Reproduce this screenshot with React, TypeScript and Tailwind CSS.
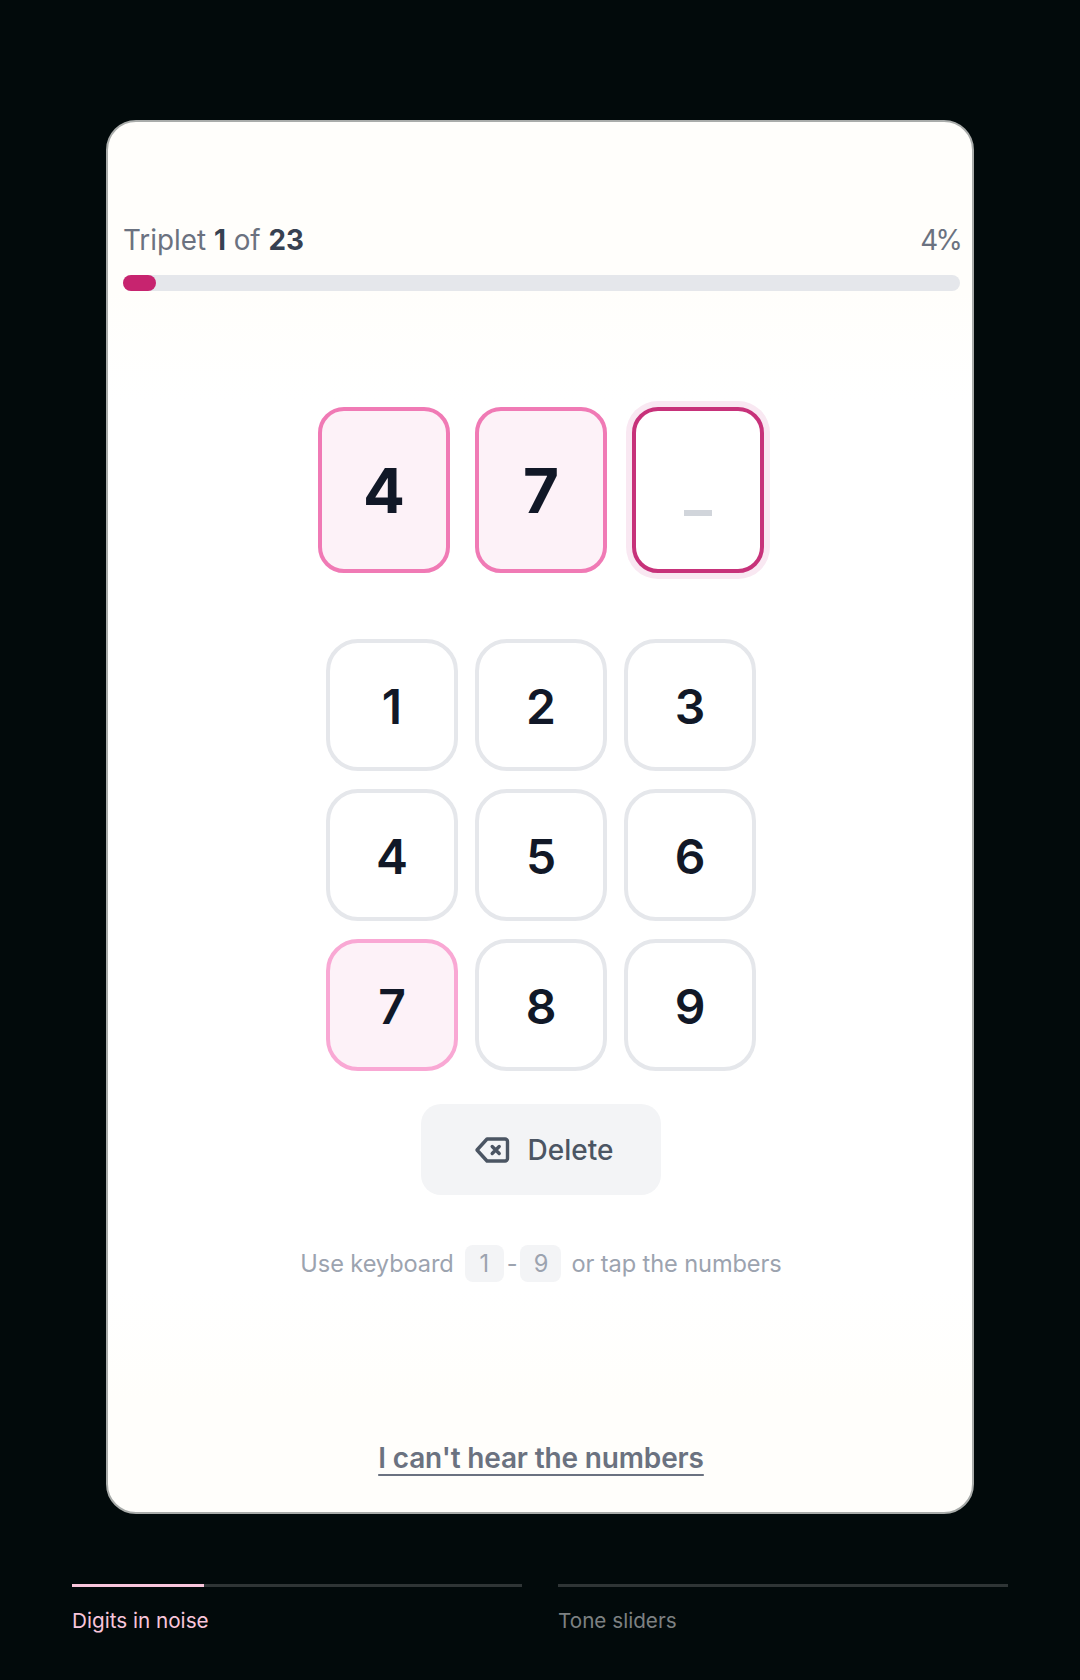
const font = "font-['Inter','Liberation_Sans',sans-serif]"

function Digit({ value }: { value: string }) {
  return (
    <div className="w-[132px] h-[166px] rounded-[26px] border-4 border-[#f07ab5] bg-[#fdf2f8] flex items-center justify-center text-[62px] font-bold text-[#111827]">
      {value}
    </div>
  )
}

function Key({ value, active }: { value: string; active?: boolean }) {
  return (
    <button
      className={
        active
          ? 'w-[132px] h-[132px] pt-[3px] rounded-[32px] border-4 border-[#f9a8d4] bg-[#fdf2f8] text-[48px] font-semibold text-[#111827]'
          : 'w-[132px] h-[132px] pt-[3px] rounded-[32px] border-4 border-[#e5e7eb] bg-white text-[48px] font-semibold text-[#111827]'
      }
    >
      {value}
    </button>
  )
}

export default function App() {
  return (
    <div className={`${font} w-[1080px] h-[1680px] bg-[#020a0b] flex flex-col items-center pt-[120px]`}>
      <div className="w-[868px] h-[1394px] rounded-[30px] border-2 border-[#a9acaa] bg-[#fffefb] flex flex-col items-center">
        <div className="w-full pl-[15px] pr-[12px] pt-[103px]">
          <div className="flex justify-between items-center h-[32px] text-[27.8px] text-[#6b7280]">
            <span>
              Triplet <b className="font-bold text-[#374151]">1</b> of <b className="font-bold text-[#374151]">23</b>
            </span>
            <span className="tracking-[-0.1em]">4%</span>
          </div>
          <div className="mt-[18px] h-4 w-full rounded-full bg-[#e5e7eb]">
            <div className="h-4 w-[33px] rounded-full bg-[#c7246f]" />
          </div>
        </div>

        <div className="w-full flex-1 flex flex-col items-center pl-[2px] bg-[linear-gradient(to_bottom,#fffefb,#ffffff_10%,#ffffff_90%,#fffefb)]">
          <div className="flex gap-[25px] mt-[116px]">
            <Digit value="4" />
            <Digit value="7" />
            <div className="w-[132px] h-[166px] rounded-[26px] border-4 border-[#c7327a] bg-white shadow-[0_0_0_6px_#f9e8f2] flex items-center justify-center">
              <div className="w-[28px] h-[6px] bg-[#d1d5db] mt-[46px]" />
            </div>
          </div>

          <div className="grid grid-cols-3 gap-x-[17px] gap-y-[18px] mt-[66px]">
            {['1', '2', '3', '4', '5', '6'].map((n) => (
              <Key key={n} value={n} />
            ))}
            <Key value="7" active />
            <Key value="8" />
            <Key value="9" />
          </div>

          <button className="mt-[33px] w-[240px] h-[91px] pl-[5px] rounded-[20px] bg-[#f3f4f6] flex items-center justify-center gap-[18px] text-[28px] font-medium text-[#4b5563]">
            <svg width="36" height="30" viewBox="0 0 36 30" fill="none" stroke="currentColor" strokeWidth="3.4" strokeLinecap="round" strokeLinejoin="round">
              <path d="M3 15 13 4h18a2.5 2.5 0 0 1 2.5 2.5v17A2.5 2.5 0 0 1 31 26H13z" />
              <path d="M18.2 11.5l7 7M25.2 11.5l-7 7" />
            </svg>
            Delete
          </button>

          <div className="mt-[50px] flex items-center text-[23.6px] tracking-[-0.1px] text-[#9ca3af]">
            <span>Use keyboard</span>
            <span className="ml-[11px] w-[39px] h-[37px] rounded-[8px] bg-[#f3f4f6] flex items-center justify-center">1</span>
            <span className="mx-[3px]">-</span>
            <span className="w-[41px] h-[37px] rounded-[8px] bg-[#f3f4f6] flex items-center justify-center">9</span>
            <span className="ml-[10px]">or tap the numbers</span>
          </div>
        </div>

        <div className="h-[113px] w-full flex justify-center pl-[2px] pt-[38px]">
          <a className="text-[28px] h-[42px] font-semibold tracking-[-0.15px] text-[#6b7280] underline underline-offset-[6px]">I can't hear the numbers</a>
        </div>
      </div>

      <div className="w-full px-[72px] mt-[70px] grid grid-cols-2 gap-[36px]">
        <div>
          <div className="h-[3px] bg-[#2f3536]">
            <div className="h-[3px] w-[132px] bg-[#f9c6dc]" />
          </div>
          <div className="mt-[18px] text-[20.7px] text-[#f9c6dc]">Digits in noise</div>
        </div>
        <div>
          <div className="h-[3px] bg-[#2f3536]" />
          <div className="mt-[18px] text-[20.7px] text-[#7d8182]">Tone sliders</div>
        </div>
      </div>
    </div>
  )
}
